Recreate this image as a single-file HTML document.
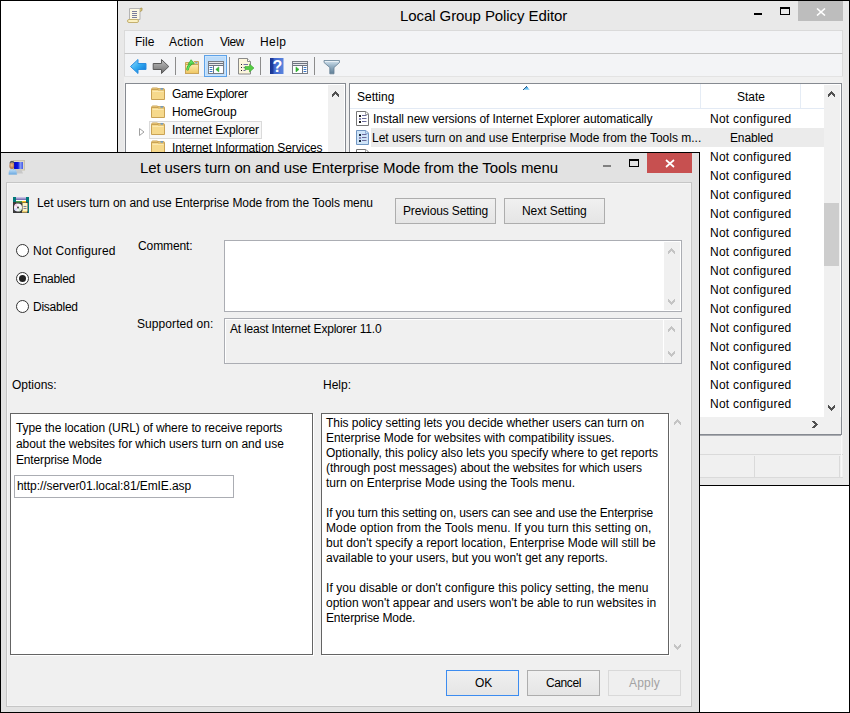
<!DOCTYPE html>
<html><head><meta charset="utf-8">
<style>
*{box-sizing:border-box;margin:0;padding:0}
html,body{width:850px;height:713px;overflow:hidden;background:#fff;position:relative;font-family:"Liberation Sans",sans-serif;font-size:12px;color:#000}
.a{position:absolute}
.btn{border:1px solid #adadad;background:linear-gradient(#f0f0f0,#e5e5e5)}
.radio{width:13px;height:13px;border:1px solid #333;border-radius:50%;background:#fff}
.dot{position:absolute;left:2px;top:2px;width:7px;height:7px;border-radius:50%;background:#222}
.t{position:absolute;white-space:pre;line-height:15px;font-size:12px}
</style></head><body>

<!-- ============ GPE window (background) ============ -->
<div class="a" style="left:117px;top:0;width:733px;height:486px;border:1px solid #000;background:#e9e9e9"></div>
<div class="a" id="gpeicon" style="left:127px;top:7px;width:16px;height:16px"></div>
<div class="t" style="left:400px;top:7px;font-size:15px;line-height:18px;color:#000;letter-spacing:-0.08px">Local Group Policy Editor</div>
<div class="a" style="left:754px;top:13px;width:8px;height:2px;background:#000"></div>
<div class="a" style="left:780px;top:7px;width:10px;height:8px;border:1px solid #000;border-top-width:2px"></div>
<div class="a" style="left:798px;top:1px;width:45px;height:20px;background:#bdbdbd"></div>

<!-- menu bar -->
<div class="a" style="left:124px;top:30px;width:719px;height:24px;background:#f3f4f6;border:1px solid #dadada;border-bottom:1px solid #c4c4c4"></div>
<div class="t" style="left:135px;top:35px">File</div>
<div class="t" style="left:169px;top:35px;letter-spacing:0.2px">Action</div>
<div class="t" style="left:220px;top:35px;letter-spacing:-0.5px">View</div>
<div class="t" style="left:260px;top:35px;letter-spacing:0.4px">Help</div>
<!-- toolbar -->
<div class="a" style="left:124px;top:54px;width:719px;height:23px;background:#f3f4f6;border-left:1px solid #dadada;border-right:1px solid #dadada"></div>
<div class="a" style="left:124px;top:76px;width:719px;height:1px;background:#e3e3e3"></div>
<div class="a" style="left:124px;top:77px;width:719px;height:401px;background:#f0f0f0"></div>

<!-- tree pane -->
<div class="a" style="left:125px;top:83px;width:221px;height:80px;background:#fff;border:1px solid #868a91"></div>
<div class="a" style="left:328px;top:85px;width:16px;height:70px;background:#f0f0f0"></div>

<!-- list pane -->
<div class="a" style="left:349px;top:83px;width:493px;height:352px;background:#fff;border:1px solid #868a91;box-shadow:0 1px 0 #a9abb0"></div>
<div class="a" style="left:350px;top:108px;width:474px;height:1px;background:#e3eaf4"></div>
<div class="a" style="left:700px;top:84px;width:1px;height:24px;background:#e5ecf5"></div>
<div class="a" style="left:800px;top:84px;width:1px;height:24px;background:#e5ecf5"></div>
<div class="t" style="left:357px;top:90px">Setting</div>
<div class="t" style="left:737px;top:90px">State</div>
<!-- v scrollbar -->
<div class="a" style="left:824px;top:85px;width:16px;height:332px;background:#f0f0f0"></div>
<div class="a" style="left:824px;top:203px;width:15px;height:63px;background:#cdcdcd"></div>
<!-- h scrollbar -->
<div class="a" style="left:350px;top:417px;width:491px;height:17px;background:#f0f0f0"></div>

<!-- status areas -->
<div class="a" style="left:124px;top:454px;width:719px;height:1px;background:#dadada"></div>
<div class="a" style="left:124px;top:477px;width:719px;height:1px;background:#dadada"></div>
<div class="a" style="left:841px;top:435px;width:1px;height:42px;background:#f8f8f8"></div>
<div class="a" style="left:754px;top:456px;width:1px;height:21px;background:#dadada"></div>
<div class="a" style="left:839px;top:456px;width:1px;height:21px;background:#dadada"></div>


<!-- GPE icons -->
<svg class="a" style="left:126px;top:6px" width="18" height="18" viewBox="0 0 18 18">
 <path d="M3.5 2.5h10.5v11h-10.5z" fill="#fdf8e2" stroke="#b4b4b4"/>
 <path d="M14 2.5l2-0.5v2.5l-2 1" fill="#d8c47a" stroke="#a89450" stroke-width="0.8"/>
 <path d="M6 5.5h5M6 7.5h5M6 9.5h5M6 11.5h5" stroke="#7a7c9c" stroke-width="1"/>
 <rect x="1.5" y="13.5" width="11" height="3" rx="1.5" fill="#fbf0c0" stroke="#c4b070"/>
</svg>
<svg class="a" style="left:816px;top:8px" width="10" height="8" viewBox="0 0 10 8"><path d="M1 0.5l8 7M9 0.5l-8 7" stroke="#fff" stroke-width="1.6"/></svg>

<svg class="a" style="left:126px;top:54px" width="220" height="24" viewBox="126 54 220 24">
 <defs>
  <linearGradient id="gb" x1="0" y1="0" x2="1" y2="1"><stop offset="0" stop-color="#9be0ff"/><stop offset="0.5" stop-color="#30aaf0"/><stop offset="1" stop-color="#0a6ad0"/></linearGradient>
  <linearGradient id="gg" x1="0" y1="0" x2="0" y2="1"><stop offset="0" stop-color="#c0c0c0"/><stop offset="1" stop-color="#6c6c6c"/></linearGradient>
  <linearGradient id="gh" x1="0" y1="0" x2="1" y2="0"><stop offset="0" stop-color="#1a3590"/><stop offset="0.22" stop-color="#1f3d9e"/><stop offset="0.3" stop-color="#3f66cc"/><stop offset="1" stop-color="#5a84de"/></linearGradient>
  <linearGradient id="gf" x1="0" y1="0" x2="0" y2="1"><stop offset="0" stop-color="#d8e6f0"/><stop offset="0.4" stop-color="#9ab4c8"/><stop offset="1" stop-color="#5f7f96"/></linearGradient>
 </defs>
 <path d="M130.5 66.5l7.5-7v4h8v6h-8v4z" fill="url(#gb)" stroke="#2a8ee0" stroke-linejoin="round"/>
 <path d="M168.8 66.5l-7.3-7v4h-8.3v6h8.3v4z" fill="url(#gg)" stroke="#5a5a5a" stroke-linejoin="round"/>
 <rect x="175" y="57" width="1" height="18" fill="#8c8c8c"/>
 <!-- up folder -->
 <linearGradient id="gfo" x1="0" y1="0" x2="0" y2="1"><stop offset="0" stop-color="#fdeab0"/><stop offset="1" stop-color="#efc660"/></linearGradient>
 <path d="M185.5 64.5v-2h7.5l1-1h4.5v3z" fill="#f4d68a" stroke="#c9a45a"/>
 <rect x="185.5" y="64.5" width="13" height="9" fill="url(#gfo)" stroke="#c9a45a"/>
 <ellipse cx="196.3" cy="62.8" rx="1.3" ry="0.6" fill="#4a90e8"/>
 <path d="M187.6 69.3q0.6-3.6 3.4-5.6" fill="none" stroke="#2fa82f" stroke-width="2.6" stroke-linecap="round"/>
 <path d="M187.6 69.3q0.6-3.6 3.4-5.6" fill="none" stroke="#5ee05e" stroke-width="1.4" stroke-linecap="round"/>
 <path d="M188.2 64.2l2.9-4.5l3.2 4.1z" fill="#5ee05e" stroke="#2fa82f" stroke-width="0.7" stroke-linejoin="round"/>
 <!-- selected button -->
 <rect x="204.5" y="55.5" width="22" height="21" fill="#bcdcfa" stroke="#5da2e8"/>
 <rect x="205.5" y="56.5" width="20" height="19" fill="none" stroke="#cbe4fc"/>
 <rect x="208.5" y="61.5" width="15" height="12" fill="#fff" stroke="#7a7e86"/>
 <rect x="209" y="62" width="14" height="1.2" fill="#e8e8ea"/>
 <path d="M209 63.5h14M209 65.5h14" stroke="#6d7480" stroke-width="1"/>
 <rect x="209" y="64" width="14" height="1" fill="#e8e8ea"/>
 <rect x="213" y="66" width="1" height="7.5" fill="#6d7480"/>
 <path d="M210 67.5h2M210 69.5h2M210 71.5h2" stroke="#3a78c8" stroke-width="1" stroke-linecap="round"/>
 <path d="M215.8 69.4l3-2.5v5z" fill="#30b030" stroke="#30b030" stroke-width="0.6" stroke-linejoin="round"/>
 <rect x="229" y="57" width="1" height="18" fill="#8c8c8c"/>
 <!-- export list -->
 <path d="M238.5 58.5h9l3 3v12.5h-12z" fill="#fcf6dc" stroke="#8a8a8a"/>
 <path d="M247.5 58.5v3h3" fill="#fff" stroke="#8a8a8a"/>
 <path d="M241 64.5h1M241 67.5h1M241 70.5h1" stroke="#222" stroke-width="1.2"/>
 <path d="M243.5 64.5h4.5M243.5 67.5h3M243.5 70.5h2" stroke="#7272a0" stroke-width="1"/>
 <path d="M245 66.5h4.5v-2.5l4.5 4l-4.5 4v-2.5h-4.5z" fill="#55cc44" stroke="#3aa830" stroke-width="0.6"/>
 <rect x="260" y="57" width="1" height="18" fill="#8c8c8c"/>
 <!-- help -->
 <rect x="270" y="58" width="13.5" height="16" fill="url(#gh)"/>
 <text x="277.3" y="72" font-family="Liberation Sans" font-weight="bold" font-size="16" fill="#fff" text-anchor="middle">?</text>
 <!-- action pane -->
 <rect x="292.5" y="61.5" width="15" height="12" fill="#fff" stroke="#7a7e86"/>
 <rect x="293" y="62" width="14" height="1.2" fill="#e8e8ea"/>
 <path d="M293 63.5h14M293 65.5h14" stroke="#6d7480" stroke-width="1"/>
 <rect x="293" y="64" width="14" height="1" fill="#e8e8ea"/>
 <rect x="302" y="66" width="1" height="7.5" fill="#6d7480"/>
 <path d="M304 67.5h2M304 69.5h2M304 71.5h2" stroke="#3a78c8" stroke-width="1" stroke-linecap="round"/>
 <path d="M299 69.4l-3-2.5v5z" fill="#30b030" stroke="#30b030" stroke-width="0.6" stroke-linejoin="round"/>
 <rect x="314" y="57" width="1" height="18" fill="#8c8c8c"/>
 <!-- filter -->
 <path d="M324 60.5h15.5v2l-5.5 5v6.3h-4.2v-6.3l-5.8-5z" fill="url(#gf)" stroke="#647f94" stroke-width="0.8"/>
 <rect x="325" y="61" width="13.5" height="1" fill="#e8f0f6"/>
</svg>

<!-- tree items -->

<div class="a" style="left:149px;top:121px;width:113px;height:18px;border:1px solid #dadada;background:#f7f7f7"></div>
<svg class="a" style="left:138px;top:84px" width="30" height="68" viewBox="138 84 30 68">
 <g id="fold"><path d="M151.5 89.5h13v10h-13z" fill="#f6d98c" stroke="#c9a255"/><path d="M151.5 89.5c0-1 0.5-1.5 1.5-1.5h4.5l1 1.5z" fill="#f6d98c" stroke="#c9a255"/><path d="M158 88.5h6v1.5h-6z" fill="#f6d98c" stroke="#c9a255" stroke-width="0.8"/><rect x="160.5" y="88.3" width="2.5" height="1.2" fill="#4a90e0"/><rect x="152.5" y="91" width="11" height="1" fill="#fbe8b0"/></g>
 <use href="#fold" y="18"/><use href="#fold" y="35"/><use href="#fold" y="53"/>
 <path d="M139.5 128.5l4.5 3.5l-4.5 3.5z" fill="#fff" stroke="#a0a0a0"/>
</svg>
<div class="t" style="left:172px;top:87px;letter-spacing:-0.4px">Game Explorer</div>
<div class="t" style="left:172px;top:105px;letter-spacing:-0.1px">HomeGroup</div>
<div class="t" style="left:172px;top:123px;letter-spacing:-0.1px">Internet Explorer</div>
<div class="t" style="left:172px;top:141px;letter-spacing:-0.1px">Internet Information Services</div>

<!-- list rows -->
<div class="a" style="left:371px;top:128px;width:453px;height:19px;background:#ebebeb"></div>
<svg class="a" style="left:355px;top:110px" width="16" height="45" viewBox="355 110 16 45">
 <g id="pg"><path d="M356.5 111.5h9.5l2.5 2.5v11.5h-12z" fill="#fff" stroke="#767676"/><path d="M365.5 111.5v3h3" fill="none" stroke="#a0a0a0"/><rect x="359" y="115" width="2" height="2" fill="#1a1a1a"/><rect x="359" y="121" width="2" height="2" fill="#1a1a1a"/><rect x="359" y="118" width="2" height="2" fill="#8a8ab8"/><path d="M362 115.5h4.5M362 118.5h4.5M362 121.5h4.5" stroke="#6a6a9a" stroke-width="1"/></g>
 <path d="M356.5 130.5h9.5l2.5 2.5v11.5h-12z" fill="#cfe4f8" stroke="#7096c2"/><path d="M365.5 130.5v3h3" fill="none" stroke="#90b0d8"/><rect x="359" y="134" width="2" height="2" fill="#1a2a3a"/><rect x="359" y="140" width="2" height="2" fill="#1a2a3a"/><rect x="359" y="137" width="2" height="2" fill="#8a8ab8"/><path d="M362 134.5h4.5M362 137.5h4.5M362 140.5h4.5" stroke="#6a6a9a" stroke-width="1"/>
 <use href="#pg" y="38"/>
</svg>
<div class="t" style="left:373px;top:112px;letter-spacing:-0.075px">Install new versions of Internet Explorer automatically</div>
<div class="t" style="left:372px;top:131px">Let users turn on and use Enterprise Mode from the Tools m...</div>
<div class="t" style="left:710px;top:112px;letter-spacing:0.25px">Not configured</div>
<div class="t" style="left:730px;top:131px;letter-spacing:-0.15px">Enabled</div>
<div class="t" style="left:710px;top:148px;line-height:19px;letter-spacing:0.25px">Not configured
Not configured
Not configured
Not configured
Not configured
Not configured
Not configured
Not configured
Not configured
Not configured
Not configured
Not configured
Not configured
Not configured</div>
<svg class="a" style="left:523px;top:86px" width="7" height="4" shape-rendering="crispEdges"><rect x="3" y="0" width="1" height="1" fill="#2f5a86"/><rect x="2" y="1" width="1" height="1" fill="#2f5a86"/><rect x="3" y="1" width="2" height="1" fill="#4aa0dc"/><rect x="1" y="2" width="1" height="1" fill="#2f5a86"/><rect x="2" y="2" width="3" height="1" fill="#6cc0ee"/><rect x="5" y="2" width="1" height="1" fill="#a8dcf6"/><rect x="0" y="3" width="1" height="1" fill="#2f5a86"/><rect x="1" y="3" width="5" height="1" fill="#9ad6f6"/><rect x="6" y="3" width="1" height="1" fill="#d6eefa"/></svg>




<svg class="a" style="left:0;top:0" width="850" height="713" shape-rendering="crispEdges"><g fill="#505050"><rect x="831" y="91" width="1" height="1"/><rect x="830" y="92" width="1" height="1"/><rect x="831" y="92" width="1" height="1"/><rect x="832" y="92" width="1" height="1"/><rect x="829" y="93" width="1" height="1"/><rect x="830" y="93" width="1" height="1"/><rect x="831" y="93" width="1" height="1"/><rect x="832" y="93" width="1" height="1"/><rect x="833" y="93" width="1" height="1"/><rect x="828" y="94" width="1" height="1"/><rect x="829" y="94" width="1" height="1"/><rect x="830" y="94" width="1" height="1"/><rect x="832" y="94" width="1" height="1"/><rect x="833" y="94" width="1" height="1"/><rect x="834" y="94" width="1" height="1"/><rect x="828" y="95" width="1" height="1"/><rect x="829" y="95" width="1" height="1"/><rect x="833" y="95" width="1" height="1"/><rect x="834" y="95" width="1" height="1"/><rect x="828" y="96" width="1" height="1"/><rect x="834" y="96" width="1" height="1"/><rect x="828" y="405" width="1" height="1"/><rect x="834" y="405" width="1" height="1"/><rect x="828" y="406" width="1" height="1"/><rect x="829" y="406" width="1" height="1"/><rect x="833" y="406" width="1" height="1"/><rect x="834" y="406" width="1" height="1"/><rect x="828" y="407" width="1" height="1"/><rect x="829" y="407" width="1" height="1"/><rect x="830" y="407" width="1" height="1"/><rect x="832" y="407" width="1" height="1"/><rect x="833" y="407" width="1" height="1"/><rect x="834" y="407" width="1" height="1"/><rect x="829" y="408" width="1" height="1"/><rect x="830" y="408" width="1" height="1"/><rect x="831" y="408" width="1" height="1"/><rect x="832" y="408" width="1" height="1"/><rect x="833" y="408" width="1" height="1"/><rect x="830" y="409" width="1" height="1"/><rect x="831" y="409" width="1" height="1"/><rect x="832" y="409" width="1" height="1"/><rect x="831" y="410" width="1" height="1"/><rect x="812" y="421" width="1" height="1"/><rect x="813" y="421" width="1" height="1"/><rect x="814" y="421" width="1" height="1"/><rect x="813" y="422" width="1" height="1"/><rect x="814" y="422" width="1" height="1"/><rect x="815" y="422" width="1" height="1"/><rect x="814" y="423" width="1" height="1"/><rect x="815" y="423" width="1" height="1"/><rect x="816" y="423" width="1" height="1"/><rect x="815" y="424" width="1" height="1"/><rect x="816" y="424" width="1" height="1"/><rect x="817" y="424" width="1" height="1"/><rect x="814" y="425" width="1" height="1"/><rect x="815" y="425" width="1" height="1"/><rect x="816" y="425" width="1" height="1"/><rect x="813" y="426" width="1" height="1"/><rect x="814" y="426" width="1" height="1"/><rect x="815" y="426" width="1" height="1"/><rect x="812" y="427" width="1" height="1"/><rect x="813" y="427" width="1" height="1"/><rect x="814" y="427" width="1" height="1"/><rect x="335" y="91" width="1" height="1"/><rect x="334" y="92" width="1" height="1"/><rect x="335" y="92" width="1" height="1"/><rect x="336" y="92" width="1" height="1"/><rect x="333" y="93" width="1" height="1"/><rect x="334" y="93" width="1" height="1"/><rect x="335" y="93" width="1" height="1"/><rect x="336" y="93" width="1" height="1"/><rect x="337" y="93" width="1" height="1"/><rect x="332" y="94" width="1" height="1"/><rect x="333" y="94" width="1" height="1"/><rect x="334" y="94" width="1" height="1"/><rect x="336" y="94" width="1" height="1"/><rect x="337" y="94" width="1" height="1"/><rect x="338" y="94" width="1" height="1"/><rect x="332" y="95" width="1" height="1"/><rect x="333" y="95" width="1" height="1"/><rect x="337" y="95" width="1" height="1"/><rect x="338" y="95" width="1" height="1"/><rect x="332" y="96" width="1" height="1"/><rect x="338" y="96" width="1" height="1"/></g></svg>
<!-- ============ Dialog ============ -->
<div class="a" style="left:0;top:152px;width:700px;height:561px;border:1px solid #000;background:#e2e2e2"></div>
<div class="t" style="left:140px;top:159px;font-size:15px;line-height:18px;color:#000;letter-spacing:-0.1px">Let users turn on and use Enterprise Mode from the Tools menu</div>
<div class="a" style="left:603px;top:165px;width:8px;height:2px;background:#808080"></div>
<div class="a" style="left:629px;top:159px;width:10px;height:8px;border:1px solid #000;border-top-width:2px"></div>
<div class="a" style="left:647px;top:153px;width:45px;height:20px;background:#c75050"></div>
<svg class="a" style="left:665px;top:159px" width="10" height="9" viewBox="0 0 10 9"><path d="M1 1l8 7M9 1l-8 7" stroke="#fff" stroke-width="1.7"/></svg>

<div class="a" style="left:6px;top:182px;width:686px;height:525px;background:#f0f0f0;border:1px solid #c6c6c6;box-shadow:inset 1px 1px 0 #f6f6f6,inset -1px -1px 0 #f4f4f4"></div>



<!-- dialog icons -->
<svg class="a" style="left:8px;top:158px" width="20" height="18" viewBox="8 158 20 18">
 <defs>
  <linearGradient id="scr" x1="0" y1="0" x2="1" y2="0"><stop offset="0" stop-color="#0000c8"/><stop offset="0.45" stop-color="#0a18e0"/><stop offset="0.7" stop-color="#8a9cf4"/><stop offset="1" stop-color="#3f58e8"/></linearGradient>
  <radialGradient id="face" cx="0.5" cy="0.4" r="0.6"><stop offset="0" stop-color="#f0c090"/><stop offset="1" stop-color="#a86838"/></radialGradient>
  <linearGradient id="shirt" x1="0" y1="0" x2="0" y2="1"><stop offset="0" stop-color="#c8e4fa"/><stop offset="1" stop-color="#6aa8e0"/></linearGradient>
 </defs>
 <rect x="13.5" y="160.5" width="11" height="9.5" fill="#dcd8c8" stroke="#c8c2ae"/>
 <rect x="14" y="162" width="9" height="7" fill="url(#scr)"/>
 <path d="M17.5 170h4l1.5 3.5h-7z" fill="#c8c8c8"/>
 <ellipse cx="11.8" cy="165.8" rx="2.4" ry="3.2" fill="url(#face)"/>
 <path d="M9.5 164c0-2.5 1.2-3.3 2.5-3.3s2.5 0.8 2.5 3l-0.5-0.5c-1 -0.8-3-0.8-4 0z" fill="#555"/>
 <path d="M8.8 174.5c0-3.5 1.2-5 3-5.5l1 1.2l1.2-1.2c1.8 0.5 2.8 2 2.8 5.5z" fill="url(#shirt)" stroke="#8ab8e0" stroke-width="0.5"/>
</svg>
<svg class="a" style="left:13px;top:197px" width="16" height="16" viewBox="0 0 16 16">
 <defs><linearGradient id="pbar" x1="0" y1="0" x2="0" y2="1"><stop offset="0" stop-color="#d8d0f0"/><stop offset="1" stop-color="#6a60a8"/></linearGradient></defs>
 <rect x="0" y="0" width="16" height="16" fill="#3a3a3a"/>
 <rect x="0" y="0" width="16" height="5" fill="#007878"/>
 <rect x="3" y="0" width="10" height="3" fill="url(#pbar)"/>
 <rect x="3" y="3" width="10" height="1" fill="#fff"/>
 <rect x="3" y="4" width="6" height="1.5" fill="#4a9a4a"/>
 <rect x="9" y="4" width="4" height="1.5" fill="#f8c020"/>
 <rect x="15" y="5" width="1" height="11" fill="#007878"/>
 <circle cx="5" cy="10.5" r="4" fill="#f4f4f4"/>
 <path d="M5 10.5l-3.5-2a4 4 0 0 1 2-2z" fill="#f8c8e8"/>
 <path d="M5 10.5l3.5 2a4 4 0 0 1-2 2z" fill="#c8f0c8"/>
 <path d="M5 10.5l-2 3.5a4 4 0 0 1-2-2z" fill="#d0d0ff"/>
 <circle cx="5" cy="10.5" r="1" fill="#404040"/>
 <rect x="9.5" y="6" width="5" height="8.5" fill="#fdf4c0"/>
 <path d="M10.5 9.5h3M10.5 11.5h3" stroke="#7070a0" stroke-width="0.9"/>
 <rect x="9" y="14" width="5" height="1.5" fill="#f0d070"/>
</svg>
<!-- dialog content -->
<div class="a" id="policyicon" style="left:13px;top:197px;width:16px;height:16px"></div>
<div class="t" style="left:37px;top:196px;letter-spacing:-0.055px">Let users turn on and use Enterprise Mode from the Tools menu</div>
<div class="a btn" style="left:395px;top:198px;width:101px;height:26px"></div>
<div class="t" style="left:403px;top:204px;letter-spacing:-0.14px">Previous Setting</div>
<div class="a btn" style="left:504px;top:198px;width:101px;height:26px"></div>
<div class="t" style="left:522px;top:204px;letter-spacing:-0.06px">Next Setting</div>

<div class="a radio" style="left:16px;top:244px"></div>
<div class="t" style="left:33px;top:244px;letter-spacing:0.13px">Not Configured</div>
<div class="a radio" style="left:16px;top:272px"><div class="dot"></div></div>
<div class="t" style="left:33px;top:272px;letter-spacing:-0.3px">Enabled</div>
<div class="a radio" style="left:16px;top:300px"></div>
<div class="t" style="left:33px;top:300px;letter-spacing:-0.24px">Disabled</div>

<div class="t" style="left:138px;top:239px;letter-spacing:-0.1px">Comment:</div>
<div class="a" style="left:224px;top:240px;width:458px;height:72px;background:#fff;border:1px solid #abadb3"></div>
<div class="a" style="left:664px;top:242px;width:16px;height:68px;background:#f0f0f0"></div>
<div class="t" style="left:137px;top:317px;letter-spacing:0.08px">Supported on:</div>
<div class="a" style="left:224px;top:318px;width:458px;height:46px;background:#f0f0f0;border:1px solid #abadb3;box-shadow:inset 1px 1px 0 #fff"></div>
<div class="a" style="left:663px;top:319px;width:1px;height:44px;background:#fff"></div>
<div class="t" style="left:230px;top:322px;letter-spacing:-0.21px">At least Internet Explorer 11.0</div>

<div class="t" style="left:12px;top:378px">Options:</div>
<div class="t" style="left:323px;top:378px">Help:</div>

<div class="a" style="left:10px;top:413px;width:303px;height:242px;background:#fff;border:1px solid #646464;box-shadow:1px 1px 0 #fff"></div>
<div class="t hl" style="left:16px;top:420px;line-height:16px;letter-spacing:-0.102px">Type the location (URL) of where to receive reports</div>
<div class="t hl" style="left:16px;top:436px;line-height:16px;letter-spacing:-0.061px">about the websites for which users turn on and use</div>
<div class="t hl" style="left:16px;top:452px;line-height:16px;letter-spacing:-0.157px">Enterprise Mode</div>
<div class="a" style="left:14px;top:475px;width:220px;height:23px;background:#fff;border:1px solid #abadb3"></div>
<div class="t" style="left:17px;top:479px;letter-spacing:-0.08px">http://server01.local:81/EmIE.asp</div>

<div class="a" style="left:321px;top:413px;width:348px;height:242px;background:#fff;border:1px solid #646464;box-shadow:1px 1px 0 #fff"></div>
<div class="t hl" style="left:326px;top:416px;letter-spacing:-0.045px">This policy setting lets you decide whether users can turn on</div>
<div class="t hl" style="left:326px;top:431px;letter-spacing:-0.028px">Enterprise Mode for websites with compatibility issues.</div>
<div class="t hl" style="left:326px;top:446px;letter-spacing:-0.008px">Optionally, this policy also lets you specify where to get reports</div>
<div class="t hl" style="left:326px;top:461px;letter-spacing:-0.074px">(through post messages) about the websites for which users</div>
<div class="t hl" style="left:326px;top:476px;letter-spacing:0.011px">turn on Enterprise Mode using the Tools menu.</div>
<div class="t hl" style="left:326px;top:506px;letter-spacing:-0.141px">If you turn this setting on, users can see and use the Enterprise</div>
<div class="t hl" style="left:326px;top:521px;letter-spacing:0.112px">Mode option from the Tools menu. If you turn this setting on,</div>
<div class="t hl" style="left:326px;top:536px;letter-spacing:0.029px">but don't specify a report location, Enterprise Mode will still be</div>
<div class="t hl" style="left:326px;top:551px;letter-spacing:-0.037px">available to your users, but you won't get any reports.</div>
<div class="t hl" style="left:326px;top:581px;letter-spacing:0.074px">If you disable or don't configure this policy setting, the menu</div>
<div class="t hl" style="left:326px;top:596px;letter-spacing:-0.011px">option won't appear and users won't be able to run websites in</div>
<div class="t hl" style="left:326px;top:611px;letter-spacing:-0.140px">Enterprise Mode.</div>

<div class="a btn" style="left:446px;top:670px;width:73px;height:26px;border-color:#3c8cf0"></div>
<div class="t" style="left:475px;top:676px">OK</div>
<div class="a btn" style="left:527px;top:670px;width:73px;height:26px"></div>
<div class="t" style="left:546px;top:676px;letter-spacing:-0.4px">Cancel</div>
<div class="a btn" style="left:608px;top:670px;width:73px;height:26px;border-color:#d9d9d9;background:#efefef"></div>
<div class="t" style="left:629px;top:676px;color:#a3a3a3;letter-spacing:0.2px">Apply</div>

<!-- dialog textbox scroll arrows -->
<svg class="a" style="left:0;top:0" width="850" height="713" shape-rendering="crispEdges"><g fill="#c4c4c4"><rect x="671" y="248" width="1" height="1"/><rect x="670" y="249" width="1" height="1"/><rect x="671" y="249" width="1" height="1"/><rect x="672" y="249" width="1" height="1"/><rect x="669" y="250" width="1" height="1"/><rect x="670" y="250" width="1" height="1"/><rect x="671" y="250" width="1" height="1"/><rect x="672" y="250" width="1" height="1"/><rect x="673" y="250" width="1" height="1"/><rect x="668" y="251" width="1" height="1"/><rect x="669" y="251" width="1" height="1"/><rect x="670" y="251" width="1" height="1"/><rect x="672" y="251" width="1" height="1"/><rect x="673" y="251" width="1" height="1"/><rect x="674" y="251" width="1" height="1"/><rect x="668" y="252" width="1" height="1"/><rect x="669" y="252" width="1" height="1"/><rect x="673" y="252" width="1" height="1"/><rect x="674" y="252" width="1" height="1"/><rect x="668" y="253" width="1" height="1"/><rect x="674" y="253" width="1" height="1"/><rect x="668" y="299" width="1" height="1"/><rect x="674" y="299" width="1" height="1"/><rect x="668" y="300" width="1" height="1"/><rect x="669" y="300" width="1" height="1"/><rect x="673" y="300" width="1" height="1"/><rect x="674" y="300" width="1" height="1"/><rect x="668" y="301" width="1" height="1"/><rect x="669" y="301" width="1" height="1"/><rect x="670" y="301" width="1" height="1"/><rect x="672" y="301" width="1" height="1"/><rect x="673" y="301" width="1" height="1"/><rect x="674" y="301" width="1" height="1"/><rect x="669" y="302" width="1" height="1"/><rect x="670" y="302" width="1" height="1"/><rect x="671" y="302" width="1" height="1"/><rect x="672" y="302" width="1" height="1"/><rect x="673" y="302" width="1" height="1"/><rect x="670" y="303" width="1" height="1"/><rect x="671" y="303" width="1" height="1"/><rect x="672" y="303" width="1" height="1"/><rect x="671" y="304" width="1" height="1"/><rect x="671" y="326" width="1" height="1"/><rect x="670" y="327" width="1" height="1"/><rect x="671" y="327" width="1" height="1"/><rect x="672" y="327" width="1" height="1"/><rect x="669" y="328" width="1" height="1"/><rect x="670" y="328" width="1" height="1"/><rect x="671" y="328" width="1" height="1"/><rect x="672" y="328" width="1" height="1"/><rect x="673" y="328" width="1" height="1"/><rect x="668" y="329" width="1" height="1"/><rect x="669" y="329" width="1" height="1"/><rect x="670" y="329" width="1" height="1"/><rect x="672" y="329" width="1" height="1"/><rect x="673" y="329" width="1" height="1"/><rect x="674" y="329" width="1" height="1"/><rect x="668" y="330" width="1" height="1"/><rect x="669" y="330" width="1" height="1"/><rect x="673" y="330" width="1" height="1"/><rect x="674" y="330" width="1" height="1"/><rect x="668" y="331" width="1" height="1"/><rect x="674" y="331" width="1" height="1"/><rect x="668" y="351" width="1" height="1"/><rect x="674" y="351" width="1" height="1"/><rect x="668" y="352" width="1" height="1"/><rect x="669" y="352" width="1" height="1"/><rect x="673" y="352" width="1" height="1"/><rect x="674" y="352" width="1" height="1"/><rect x="668" y="353" width="1" height="1"/><rect x="669" y="353" width="1" height="1"/><rect x="670" y="353" width="1" height="1"/><rect x="672" y="353" width="1" height="1"/><rect x="673" y="353" width="1" height="1"/><rect x="674" y="353" width="1" height="1"/><rect x="669" y="354" width="1" height="1"/><rect x="670" y="354" width="1" height="1"/><rect x="671" y="354" width="1" height="1"/><rect x="672" y="354" width="1" height="1"/><rect x="673" y="354" width="1" height="1"/><rect x="670" y="355" width="1" height="1"/><rect x="671" y="355" width="1" height="1"/><rect x="672" y="355" width="1" height="1"/><rect x="671" y="356" width="1" height="1"/><rect x="677" y="419" width="1" height="1"/><rect x="676" y="420" width="1" height="1"/><rect x="677" y="420" width="1" height="1"/><rect x="678" y="420" width="1" height="1"/><rect x="675" y="421" width="1" height="1"/><rect x="676" y="421" width="1" height="1"/><rect x="677" y="421" width="1" height="1"/><rect x="678" y="421" width="1" height="1"/><rect x="679" y="421" width="1" height="1"/><rect x="674" y="422" width="1" height="1"/><rect x="675" y="422" width="1" height="1"/><rect x="676" y="422" width="1" height="1"/><rect x="678" y="422" width="1" height="1"/><rect x="679" y="422" width="1" height="1"/><rect x="680" y="422" width="1" height="1"/><rect x="674" y="423" width="1" height="1"/><rect x="675" y="423" width="1" height="1"/><rect x="679" y="423" width="1" height="1"/><rect x="680" y="423" width="1" height="1"/><rect x="674" y="424" width="1" height="1"/><rect x="680" y="424" width="1" height="1"/><rect x="674" y="644" width="1" height="1"/><rect x="680" y="644" width="1" height="1"/><rect x="674" y="645" width="1" height="1"/><rect x="675" y="645" width="1" height="1"/><rect x="679" y="645" width="1" height="1"/><rect x="680" y="645" width="1" height="1"/><rect x="674" y="646" width="1" height="1"/><rect x="675" y="646" width="1" height="1"/><rect x="676" y="646" width="1" height="1"/><rect x="678" y="646" width="1" height="1"/><rect x="679" y="646" width="1" height="1"/><rect x="680" y="646" width="1" height="1"/><rect x="675" y="647" width="1" height="1"/><rect x="676" y="647" width="1" height="1"/><rect x="677" y="647" width="1" height="1"/><rect x="678" y="647" width="1" height="1"/><rect x="679" y="647" width="1" height="1"/><rect x="676" y="648" width="1" height="1"/><rect x="677" y="648" width="1" height="1"/><rect x="678" y="648" width="1" height="1"/><rect x="677" y="649" width="1" height="1"/></g></svg>
<div class="a" style="left:0;top:0;width:850px;height:713px;border:1px solid #000"></div>
</body></html>
